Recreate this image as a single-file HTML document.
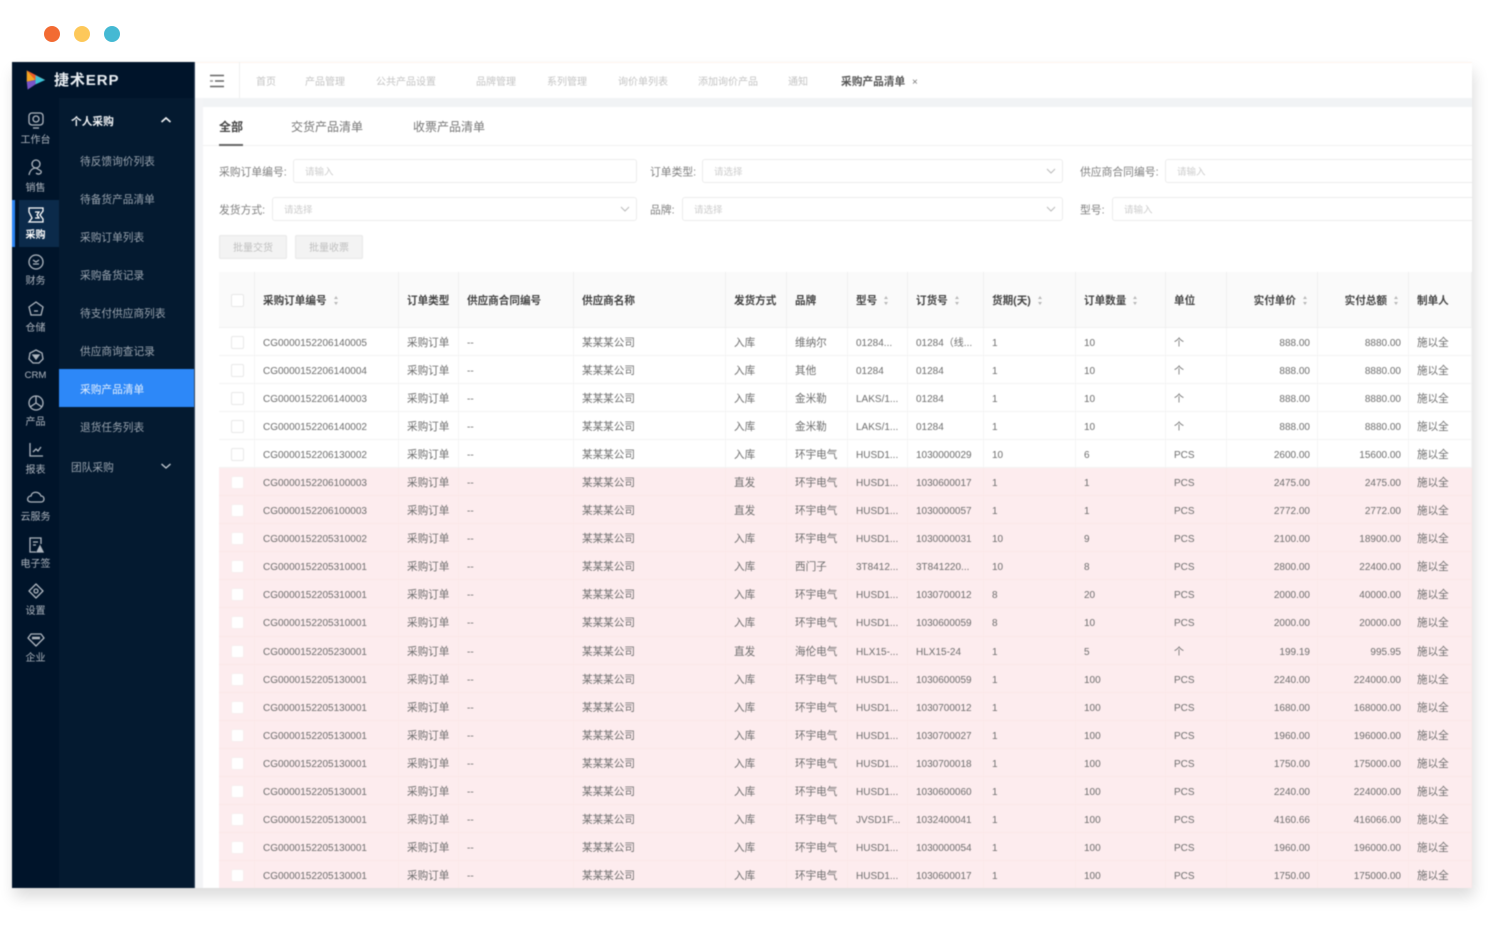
<!DOCTYPE html>
<html lang="zh"><head><meta charset="utf-8"><title>ERP</title>
<style>
*{box-sizing:border-box;margin:0;padding:0}
html,body{width:1488px;height:926px;overflow:hidden;background:#fff}
body{font-family:"Liberation Sans","Noto Sans CJK SC",sans-serif;position:relative}
.dot{position:absolute;top:26px;width:16px;height:16px;border-radius:50%}
#wrap{position:absolute;left:0;top:0;width:1488px;height:926px;filter:blur(.6px)}
#app{position:absolute;left:12px;top:62px;width:1460px;height:826px;background:#fff;box-shadow:2px 9px 14px rgba(0,0,0,.14);overflow:hidden}
.abs,.abs *{white-space:nowrap}
.abs{position:absolute}
#rail{position:absolute;left:0;top:0;width:47px;height:826px;background:#00142a}
#sub{position:absolute;left:47px;top:36px;width:135px;height:790px;background:#041a30}
#logo{position:absolute;left:0;top:0;width:182px;height:36px;background:#00142a}
#edge{position:absolute;left:182px;top:0;width:1px;height:826px;background:#31435a}
.nav{position:absolute;left:0;width:47px;text-align:center;font-size:10px;line-height:14px;color:#aeb6bf;transform:translateY(2px)}
.ic{position:absolute;left:14px;width:20px;height:20px;fill:none;stroke:#aeb6bf;stroke-width:1.3}
.m{position:absolute;left:68px;font-size:10.7px;line-height:14px;color:#99a3ae;transform:translateY(1px)}
.tb{position:absolute;top:14px;font-size:10px;line-height:14px;color:#c4c4c4}
.lb{position:absolute;font-size:10.8px;line-height:14px;color:#808080;transform:translateY(.5px)}
.in{position:absolute;height:24px;border:1px solid #ececec;border-radius:3px;background:#fff;font-size:9.5px;line-height:26px;color:#ccc;padding-left:11px}
.in svg{position:absolute;right:6px;top:8px}
.btn{position:absolute;top:173px;width:68px;height:24px;background:#f3f3f3;border:1px solid #e8e8e8;border-radius:2px;font-size:10px;line-height:26px;text-align:center;color:#c0c0c0}
#tbl{position:absolute;left:207px;top:210px;width:1253px}
.r{display:grid;grid-template-columns:36px 144px 60px 115px 152px 61px 61px 60px 76px 92px 90px 61px 91px 91px 63px;height:28.05px;line-height:31px;font-size:10px;color:#6e6e6e;border-bottom:1px solid #f3f3f3;background:#fff}
.r>*{padding:0 0 0 8px;overflow:hidden;white-space:nowrap;border-right:1px solid #f5f5f5;font-style:normal;font-weight:400}
.r>*:nth-child(3),.r>*:nth-child(5),.r>*:nth-child(6),.r>*:nth-child(7),.r>*:nth-child(15){font-size:10.6px}
.r>*:nth-child(13),.r>*:nth-child(14){text-align:right;padding:0 7px 0 0}
.r>*:first-child{padding:0;position:relative}
.r>*:first-child::after{content:"";position:absolute;left:12px;top:8px;width:11px;height:11px;border:1px solid #e8e8e8;border-radius:2px;background:#fff}
.p{background:#fdecee;border-bottom-color:#fbe7e8}
.p>*{border-right-color:#fbe8e9}
.p>*:first-child::after{border-color:#f8eeee}
.h{height:56px;line-height:59px;background:#fafafa;color:#444;font-size:10.6px;border-bottom:1px solid #f0f0f0}
.h>*{font-weight:700;border-right-color:#f0f0f0;font-size:10.6px!important}
.r.h>*:first-child::after{top:22px}
.r.h>*:nth-child(13),.r.h>*:nth-child(14){padding-right:8px}
.s{display:inline-block;position:relative;width:6px;height:9px;margin-left:7px;vertical-align:-1px}
.s::before,.s::after{content:"";position:absolute;left:0;border-left:2.5px solid transparent;border-right:2.5px solid transparent}
.s::before{top:0;border-bottom:3px solid #b9b9b9}
.s::after{bottom:0;border-top:3px solid #b9b9b9}
</style></head><body>
<div class="dot" style="left:44px;background:#f26b33"></div>
<div class="dot" style="left:74px;background:#fdc85a"></div>
<div class="dot" style="left:104px;background:#45b9d3"></div>
<div id="wrap">
<div id="app">
 <div id="rail"></div><div id="sub"></div><div id="logo"></div><div id="edge"></div>
 <svg class="abs" style="left:13px;top:6px" width="21" height="24" viewBox="0 0 24 24"><path d="M2 1 L23 12 L12 12 Z" fill="#f25d2c"/><path d="M2 1 L12 12 L2 14 Z" fill="#f5a623"/><path d="M12 6.5 L23 12 L12 17 Z" fill="#3cc4d8"/><path d="M2 14 L12 12 L12 17 L3 23 Z" fill="#7a55c8"/></svg>
 <div class="abs" style="left:42px;top:10px;font-size:15px;line-height:18px;font-weight:700;letter-spacing:.9px;color:#e8edf2">捷术ERP</div>

 <div class="abs" style="left:7px;top:138px;width:40px;height:47px;background:#0b2a4a"></div>
 <div class="abs" style="left:0;top:138px;width:3px;height:47px;background:#2b85f5"></div>

 <svg class="ic" style="top:48px" viewBox="0 0 20 20"><rect x="3" y="3" width="14" height="12" rx="3"/><circle cx="10" cy="9" r="3"/><path d="M7 18h6"/></svg><div class="nav" style="top:70px">工作台</div>
 <svg class="ic" style="top:96px" viewBox="0 0 20 20"><circle cx="10" cy="6" r="4"/><path d="M3 17c1-5 4-7 7-7l5 3c1 3-3 4-5 2"/></svg><div class="nav" style="top:118px">销售</div>
 <svg class="ic" style="top:143px;stroke:#fff" viewBox="0 0 20 20"><path d="M3 3h14v3l-3 4 3 4v3H3l3-4-3-6z"/><path d="M9 7h4l-2 3 2 3H9"/></svg><div class="nav" style="top:165px;color:#fff;font-weight:700">采购</div>
 <svg class="ic" style="top:190px" viewBox="0 0 20 20"><circle cx="10" cy="10" r="7"/><path d="M7 8l3 2 3-2M7 12h6"/></svg><div class="nav" style="top:211px">财务</div>
 <svg class="ic" style="top:237px" viewBox="0 0 20 20"><path d="M10 3l7 5-2 8H5L3 8z"/><path d="M8 12h4"/></svg><div class="nav" style="top:258px">仓储</div>
 <svg class="ic" style="top:284px" viewBox="0 0 20 20"><path d="M10 4l6 3 1 6-4 4H7l-4-4 1-6z"/><path d="M7 9h6l-3 4z" fill="#aeb6bf"/></svg><div class="nav" style="top:305px;font-size:9.6px">CRM</div>
 <svg class="ic" style="top:331px" viewBox="0 0 20 20"><circle cx="10" cy="10" r="7"/><path d="M10 10V3M10 10l-6 4M10 10l6 4"/></svg><div class="nav" style="top:352px">产品</div>
 <svg class="ic" style="top:378px" viewBox="0 0 20 20"><path d="M4 3v13h13"/><path d="M7 12l3-3 2 2 3-4"/></svg><div class="nav" style="top:400px">报表</div>
 <svg class="ic" style="top:425px" viewBox="0 0 20 20"><path d="M5 15c-5 0-4-6 0-6 1-5 8-5 10 0 4 0 4 6 0 6z"/></svg><div class="nav" style="top:447px">云服务</div>
 <svg class="ic" style="top:473px" viewBox="0 0 20 20"><path d="M15 9V3H4v14h6"/><path d="M7 7h5M7 10h3"/><path d="M11 17l3-6 3 6z" fill="#aeb6bf"/></svg><div class="nav" style="top:494px">电子签</div>
 <svg class="ic" style="top:519px" viewBox="0 0 20 20"><path d="M10 3l7 7-7 7-7-7z" stroke-linejoin="round"/><circle cx="10" cy="10" r="2"/></svg><div class="nav" style="top:541px">设置</div>
 <svg class="ic" style="top:567px" viewBox="0 0 20 20"><path d="M5 5h10l3 4-8 8-8-8z" stroke-linejoin="round"/><path d="M6 9h8" stroke-width="2.5"/></svg><div class="nav" style="top:588px">企业</div>

 <div class="abs" style="left:59px;top:53px;font-size:10.7px;line-height:14px;font-weight:700;color:#f2f4f6">个人采购</div>
 <svg class="abs" style="left:148px;top:54px" width="12" height="8" viewBox="0 0 12 8"><path d="M1.5 6L6 2l4.5 4" fill="none" stroke="#f2f4f6" stroke-width="1.6"/></svg>
 <div class="m" style="top:92px">待反馈询价列表</div>
 <div class="m" style="top:130px">待备货产品清单</div>
 <div class="m" style="top:168px">采购订单列表</div>
 <div class="m" style="top:206px">采购备货记录</div>
 <div class="m" style="top:244px">待支付供应商列表</div>
 <div class="m" style="top:282px">供应商询查记录</div>
 <div class="abs" style="left:47px;top:307px;width:135px;height:38px;background:#2d88f8"></div>
 <div class="m" style="top:320px;color:#e6f0fd">采购产品清单</div>
 <div class="m" style="top:358px">退货任务列表</div>
 <div class="abs" style="left:59px;top:399px;font-size:10.7px;line-height:14px;color:#99a3ae">团队采购</div>
 <svg class="abs" style="left:148px;top:400px" width="12" height="8" viewBox="0 0 12 8"><path d="M1.5 2L6 6l4.5-4" fill="none" stroke="#c2c9d0" stroke-width="1.4"/></svg>

 <!-- main -->
 <div class="abs" style="left:183px;top:0;width:1277px;height:826px;background:#fff"></div>
 <div class="abs" style="left:183px;top:0;width:1277px;height:1px;background:#fdf4ee"></div>
 <div class="abs" style="left:183px;top:36px;width:1277px;height:9px;background:#f1f3f5"></div>
 <div class="abs" style="left:183px;top:36px;width:8px;height:790px;background:#f3f4f6"></div>
 <svg class="abs" style="left:197px;top:11px" width="16" height="16" viewBox="0 0 16 16"><path d="M1 2.5h14M6 8h9M1 13.5h14" stroke="#666" stroke-width="1.4"/><path d="M1 8h3" stroke="#999" stroke-width="1.6"/></svg>
 <div class="abs" style="left:227px;top:0;width:1px;height:36px;background:#f0f0f0"></div>
 <div class="tb" style="left:244px">首页</div>
 <div class="tb" style="left:293px">产品管理</div>
 <div class="tb" style="left:364px">公共产品设置</div>
 <div class="tb" style="left:464px">品牌管理</div>
 <div class="tb" style="left:535px">系列管理</div>
 <div class="tb" style="left:606px">询价单列表</div>
 <div class="tb" style="left:686px">添加询价产品</div>
 <div class="tb" style="left:776px">通知</div>
 <div class="tb" style="left:829px;top:13px;color:#555;font-weight:700;font-size:10.7px">采购产品清单</div>
 <div class="tb" style="left:900px;color:#777">×</div>

 <div class="abs" style="left:207px;top:57px;font-size:12px;line-height:16px;font-weight:700;color:#444">全部</div>
 <div class="abs" style="left:279px;top:57px;font-size:12px;line-height:16px;color:#777">交货产品清单</div>
 <div class="abs" style="left:401px;top:57px;font-size:12px;line-height:16px;color:#777">收票产品清单</div>
 <div class="abs" style="left:191px;top:83px;width:1269px;height:1px;background:#f1f1f1"></div>
 <div class="abs" style="left:207px;top:82px;width:24px;height:2px;background:#666"></div>

 <div class="lb" style="left:207px;top:103px">采购订单编号:</div>
 <div class="in" style="left:281px;top:97px;width:344px">请输入</div>
 <div class="lb" style="left:638px;top:103px">订单类型:</div>
 <div class="in" style="left:690px;top:97px;width:361px">请选择<svg width="10" height="7" viewBox="0 0 10 7"><path d="M1 1l4 4 4-4" fill="none" stroke="#bbb"/></svg></div>
 <div class="lb" style="left:1068px;top:103px">供应商合同编号:</div>
 <div class="in" style="left:1153px;top:97px;width:320px">请输入</div>
 <div class="lb" style="left:207px;top:141px">发货方式:</div>
 <div class="in" style="left:260px;top:135px;width:365px">请选择<svg width="10" height="7" viewBox="0 0 10 7"><path d="M1 1l4 4 4-4" fill="none" stroke="#bbb"/></svg></div>
 <div class="lb" style="left:638px;top:141px">品牌:</div>
 <div class="in" style="left:670px;top:135px;width:381px">请选择<svg width="10" height="7" viewBox="0 0 10 7"><path d="M1 1l4 4 4-4" fill="none" stroke="#bbb"/></svg></div>
 <div class="lb" style="left:1068px;top:141px">型号:</div>
 <div class="in" style="left:1100px;top:135px;width:372px">请输入</div>
 <div class="btn" style="left:207px">批量交货</div>
 <div class="btn" style="left:283px">批量收票</div>

 <div id="tbl">
  <div class="r h"><i></i><b>采购订单编号<u class="s"></u></b><b>订单类型</b><b>供应商合同编号</b><b>供应商名称</b><b>发货方式</b><b>品牌</b><b>型号<u class="s"></u></b><b>订货号<u class="s"></u></b><b>货期(天)<u class="s"></u></b><b>订单数量<u class="s"></u></b><b>单位</b><b>实付单价<u class="s"></u></b><b>实付总额<u class="s"></u></b><b>制单人</b></div>
  <div class="r"><i></i><span>CG0000152206140005</span><span>采购订单</span><span>--</span><span>某某某公司</span><span>入库</span><span>维纳尔</span><span>01284...</span><span>01284（线...</span><span>1</span><span>10</span><span>个</span><span>888.00</span><span>8880.00</span><span>施以全</span></div>
  <div class="r"><i></i><span>CG0000152206140004</span><span>采购订单</span><span>--</span><span>某某某公司</span><span>入库</span><span>其他</span><span>01284</span><span>01284</span><span>1</span><span>10</span><span>个</span><span>888.00</span><span>8880.00</span><span>施以全</span></div>
  <div class="r"><i></i><span>CG0000152206140003</span><span>采购订单</span><span>--</span><span>某某某公司</span><span>入库</span><span>金米勒</span><span>LAKS/1...</span><span>01284</span><span>1</span><span>10</span><span>个</span><span>888.00</span><span>8880.00</span><span>施以全</span></div>
  <div class="r"><i></i><span>CG0000152206140002</span><span>采购订单</span><span>--</span><span>某某某公司</span><span>入库</span><span>金米勒</span><span>LAKS/1...</span><span>01284</span><span>1</span><span>10</span><span>个</span><span>888.00</span><span>8880.00</span><span>施以全</span></div>
  <div class="r"><i></i><span>CG0000152206130002</span><span>采购订单</span><span>--</span><span>某某某公司</span><span>入库</span><span>环宇电气</span><span>HUSD1...</span><span>1030000029</span><span>10</span><span>6</span><span>PCS</span><span>2600.00</span><span>15600.00</span><span>施以全</span></div>
  <div class="r p"><i></i><span>CG0000152206100003</span><span>采购订单</span><span>--</span><span>某某某公司</span><span>直发</span><span>环宇电气</span><span>HUSD1...</span><span>1030600017</span><span>1</span><span>1</span><span>PCS</span><span>2475.00</span><span>2475.00</span><span>施以全</span></div>
  <div class="r p"><i></i><span>CG0000152206100003</span><span>采购订单</span><span>--</span><span>某某某公司</span><span>直发</span><span>环宇电气</span><span>HUSD1...</span><span>1030000057</span><span>1</span><span>1</span><span>PCS</span><span>2772.00</span><span>2772.00</span><span>施以全</span></div>
  <div class="r p"><i></i><span>CG0000152205310002</span><span>采购订单</span><span>--</span><span>某某某公司</span><span>入库</span><span>环宇电气</span><span>HUSD1...</span><span>1030000031</span><span>10</span><span>9</span><span>PCS</span><span>2100.00</span><span>18900.00</span><span>施以全</span></div>
  <div class="r p"><i></i><span>CG0000152205310001</span><span>采购订单</span><span>--</span><span>某某某公司</span><span>入库</span><span>西门子</span><span>3T8412...</span><span>3T841220...</span><span>10</span><span>8</span><span>PCS</span><span>2800.00</span><span>22400.00</span><span>施以全</span></div>
  <div class="r p"><i></i><span>CG0000152205310001</span><span>采购订单</span><span>--</span><span>某某某公司</span><span>入库</span><span>环宇电气</span><span>HUSD1...</span><span>1030700012</span><span>8</span><span>20</span><span>PCS</span><span>2000.00</span><span>40000.00</span><span>施以全</span></div>
  <div class="r p"><i></i><span>CG0000152205310001</span><span>采购订单</span><span>--</span><span>某某某公司</span><span>入库</span><span>环宇电气</span><span>HUSD1...</span><span>1030600059</span><span>8</span><span>10</span><span>PCS</span><span>2000.00</span><span>20000.00</span><span>施以全</span></div>
  <div class="r p"><i></i><span>CG0000152205230001</span><span>采购订单</span><span>--</span><span>某某某公司</span><span>直发</span><span>海伦电气</span><span>HLX15-...</span><span>HLX15-24</span><span>1</span><span>5</span><span>个</span><span>199.19</span><span>995.95</span><span>施以全</span></div>
  <div class="r p"><i></i><span>CG0000152205130001</span><span>采购订单</span><span>--</span><span>某某某公司</span><span>入库</span><span>环宇电气</span><span>HUSD1...</span><span>1030600059</span><span>1</span><span>100</span><span>PCS</span><span>2240.00</span><span>224000.00</span><span>施以全</span></div>
  <div class="r p"><i></i><span>CG0000152205130001</span><span>采购订单</span><span>--</span><span>某某某公司</span><span>入库</span><span>环宇电气</span><span>HUSD1...</span><span>1030700012</span><span>1</span><span>100</span><span>PCS</span><span>1680.00</span><span>168000.00</span><span>施以全</span></div>
  <div class="r p"><i></i><span>CG0000152205130001</span><span>采购订单</span><span>--</span><span>某某某公司</span><span>入库</span><span>环宇电气</span><span>HUSD1...</span><span>1030700027</span><span>1</span><span>100</span><span>PCS</span><span>1960.00</span><span>196000.00</span><span>施以全</span></div>
  <div class="r p"><i></i><span>CG0000152205130001</span><span>采购订单</span><span>--</span><span>某某某公司</span><span>入库</span><span>环宇电气</span><span>HUSD1...</span><span>1030700018</span><span>1</span><span>100</span><span>PCS</span><span>1750.00</span><span>175000.00</span><span>施以全</span></div>
  <div class="r p"><i></i><span>CG0000152205130001</span><span>采购订单</span><span>--</span><span>某某某公司</span><span>入库</span><span>环宇电气</span><span>HUSD1...</span><span>1030600060</span><span>1</span><span>100</span><span>PCS</span><span>2240.00</span><span>224000.00</span><span>施以全</span></div>
  <div class="r p"><i></i><span>CG0000152205130001</span><span>采购订单</span><span>--</span><span>某某某公司</span><span>入库</span><span>环宇电气</span><span>JVSD1F...</span><span>1032400041</span><span>1</span><span>100</span><span>PCS</span><span>4160.66</span><span>416066.00</span><span>施以全</span></div>
  <div class="r p"><i></i><span>CG0000152205130001</span><span>采购订单</span><span>--</span><span>某某某公司</span><span>入库</span><span>环宇电气</span><span>HUSD1...</span><span>1030000054</span><span>1</span><span>100</span><span>PCS</span><span>1960.00</span><span>196000.00</span><span>施以全</span></div>
  <div class="r p"><i></i><span>CG0000152205130001</span><span>采购订单</span><span>--</span><span>某某某公司</span><span>入库</span><span>环宇电气</span><span>HUSD1...</span><span>1030600017</span><span>1</span><span>100</span><span>PCS</span><span>1750.00</span><span>175000.00</span><span>施以全</span></div>
 </div>
</div>
</div>
</body></html>
